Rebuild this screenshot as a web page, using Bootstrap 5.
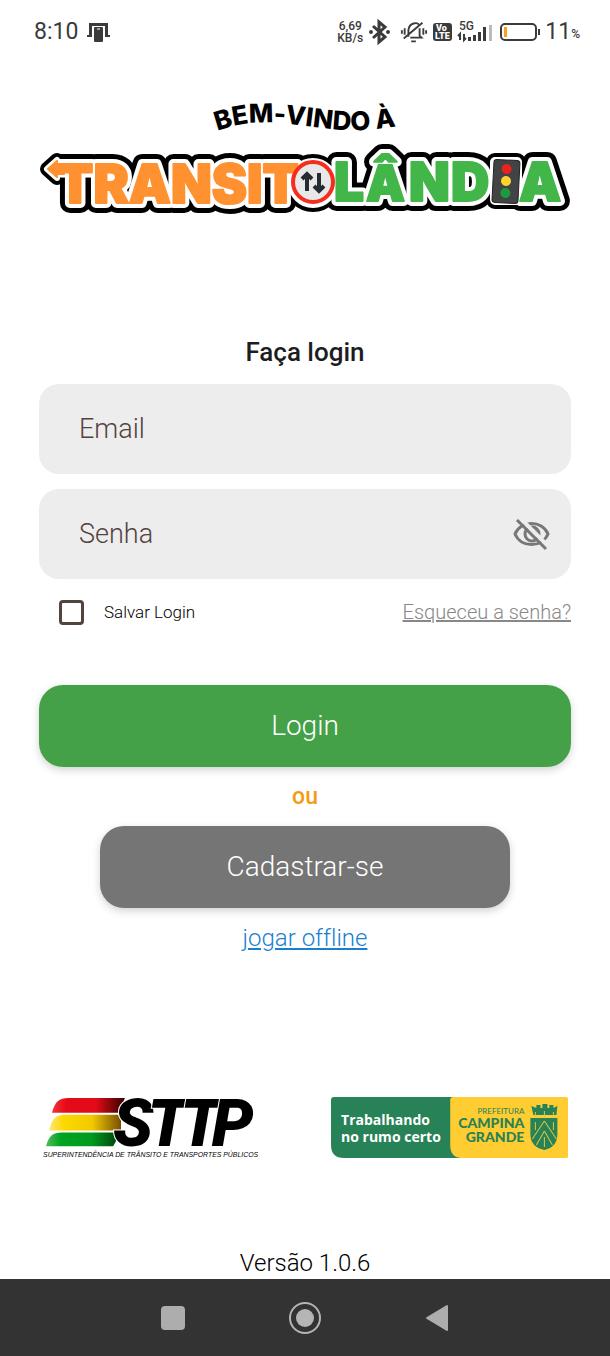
<!DOCTYPE html>
<html lang="pt-BR">
<head>
<meta charset="utf-8">
<meta name="viewport" content="width=device-width, initial-scale=1">
<title>Transitolândia</title>
<link href="https://cdn.jsdelivr.net/npm/bootstrap@5.3.0/dist/css/bootstrap.min.css" rel="stylesheet">
<style>
  body { font-family: Roboto, sans-serif; color: #1d1d1f; background: #fff; font-variant-ligatures: none; }
  svg { display: block; }
  svg text { white-space: pre; }
  .status-bar { height: 64px; padding: 0 30px 0 34px; color: #3b3b3b; font-size: 23px; line-height: 28px; }
  .rate { font-size: 12px; line-height: 12px; font-weight: 500; }
  .screen { padding: 32px 39px 0; }
  .logo-word { font-family: Inter, sans-serif; font-weight: 900; font-size: 53px; }
  .title { font-size: 26px; line-height: 32px; font-weight: 500; margin: 118px 0 16px; }
  .field { height: 90px; border: 0; border-radius: 20px; background: #ededed; padding: 0 40px; font-size: 27px; font-weight: 300; }
  .field:focus { background: #ededed; }
  .field-label { left: 40px; top: 25px; font-size: 27px; line-height: 40px; font-weight: 300; color: #53433f; pointer-events: none; }
  .field:not(:placeholder-shown) + .field-label { visibility: hidden; }
  .fields { gap: 15px; }
  .eye { right: 18px; top: 0; bottom: 0; }
  .options { margin-top: 18px; padding-left: 20px; height: 30px; }
  .save-box.form-check-input { width: 25px; height: 25px; margin: 0 20px 0 0; border: 3px solid #53433f; border-radius: 4px; }
  .save-label { font-size: 17px; line-height: 24px; font-weight: 300; color: #000; }
  .forgot { font-size: 20px; line-height: 24px; font-weight: 300; color: #888; }
  .action { height: 82px; border: 0; border-radius: 24px; font-size: 28px; font-weight: 300; color: #fff; box-shadow: 0 3px 8px rgba(0,0,0,.18); }
  .action-login { background: #45a148; margin-top: 58px; }
  .action-signup { background: #757575; width: 77%; }
  .or { font-size: 23px; line-height: 28px; font-weight: 500; color: #f39c12; margin: 16px 0 15px; }
  .offline { font-size: 24px; line-height: 28px; font-weight: 300; color: #1b7fd0; margin-top: 16px; }
  .sponsors { margin-top: 144px; padding: 0 3px 0 6px; }
  .sponsor-sttp { width: 40%; }
  .sponsor-city { width: 45.4%; }
  .version { font-size: 24px; line-height: 28px; font-weight: 300; color: #000; padding-bottom: 2px; }
  .system-nav { height: 77px; background: #333; padding: 0 154px; }
</style>
</head>
<body>
<div class="d-flex flex-column min-vh-100">
  <header class="status-bar d-flex align-items-center">
    <span>8:10</span>
    <svg class="ms-2 me-auto" width="26" height="24" viewBox="0 0 26 24" aria-hidden="true">
      <path d="M3 3H22V15H19V6H6V15H3ZM1 15H6V17H1ZM19 15H24V17H19Z" fill="#3b3b3b"/>
      <rect x="8" y="7" width="9" height="15" rx="1" fill="#3b3b3b"/>
      <path d="M11 9H14" stroke="#fff"/>
    </svg>
    <span class="rate text-center">6,69<br>KB/s</span>
    <svg class="ms-1" width="25" height="28" viewBox="0 0 25 28" fill="none" stroke="#3b3b3b" stroke-width="3" aria-hidden="true">
      <path d="M6 8L18 19L12 24V4L18 9L6 20"/>
      <circle cx="4" cy="14" r="1" stroke-width="2"/><circle cx="21" cy="14" r="1" stroke-width="2"/>
    </svg>
    <svg class="ms-2 me-1" width="28" height="28" viewBox="0 0 30 28" fill="none" stroke="#3b3b3b" stroke-width="2" aria-hidden="true">
      <path d="M9 19V12C10 3 19 4 20 6M21 10V18L23 20H11M4 21L24 4M12 24H17M5 10V17M2 12V16M25 10V17M28 12V16"/>
    </svg>
    <svg width="21" height="28" viewBox="0 0 21 28" aria-hidden="true">
      <rect x="1" y="5" width="19" height="18" rx="3" fill="#3b3b3b"/>
      <g fill="#fff" font-family="Roboto, sans-serif" font-weight="900" font-size="9"><text x="4" y="13">Vo</text><text x="3" y="21">LTE</text></g>
    </svg>
    <svg class="ms-1" width="38" height="28" viewBox="0 0 38 28" aria-hidden="true">
      <text x="2" y="12" font-family="Roboto, sans-serif" font-weight="500" font-size="12" fill="#3b3b3b">5G</text>
      <path d="M3 22V16L1 18M7 16V22L9 20" fill="none" stroke="#3b3b3b" stroke-width="2"/>
      <path d="M11 19H14V23H11ZM16 17H19V23H16ZM21 14H24V23H21ZM26 9H29V23H26Z" fill="#3b3b3b"/>
      <path d="M32 7H35V23H32Z" fill="#bbb"/>
    </svg>
    <svg class="ms-1" width="42" height="28" viewBox="0 0 42 28" aria-hidden="true">
      <rect x="2" y="6" width="35" height="16" rx="4" fill="none" stroke="#3b3b3b" stroke-width="2"/>
      <rect x="5" y="9" width="3" height="10" fill="#ff9f1a"/><rect x="39" y="11" width="2" height="6" fill="#3b3b3b"/>
    </svg>
    <span class="ms-1">11</span><span class="rate pt-1">%</span>
  </header>

  <main class="screen flex-grow-1 d-flex flex-column">
    <svg class="w-100" viewBox="39 96 532 122" role="img" aria-label="Bem-vindo à Transitolândia">
      <defs>
        <path id="wave" d="M217 131C242 122 262 121 290 124S345 132 365 130S392 128 420 121"/>
        <g id="marks">
          <path d="M47 169L57 160V165H64V174H57V178Z"/>
          <circle cx="313" cy="183" r="22"/><rect x="493" y="160" width="26" height="42" rx="2"/>
        </g>
        <text id="w1" class="logo-word" x="57" y="203">TRANSIT</text>
        <text id="w2" class="logo-word" x="334 366 409 451 519" y="201">L<tspan font-size="49">Â</tspan>NDA</text>
      </defs>
      <text font-family="Inter, sans-serif" font-weight="800" font-size="26"><textPath href="#wave">BEM-VINDO À</textPath></text>
      <g stroke-linejoin="round">
        <g fill="#000" stroke="#000" stroke-width="20"><use href="#w1"/><use href="#w2"/><use href="#marks" stroke-width="14"/></g>
        <g fill="#fff" stroke="#fff" stroke-width="10"><use href="#w1"/><use href="#w2"/><use href="#marks" stroke-width="6"/></g>
        <g fill="#ff9130" stroke="#ff9130" stroke-width="2"><use href="#w1"/><path d="M48 169L57 161V165H64V174H57V177Z"/></g>
        <use href="#w2" fill="#42b649" stroke="#42b649" stroke-width="2"/>
      </g>
      <circle cx="313" cy="182" r="20" fill="#e8e8e8" stroke="#f52d1d" stroke-width="4"/>
      <path d="M307 191V175M302 179L307 174L312 179M319 173V189M314 186L319 191L324 186" fill="none" stroke="#252b33" stroke-width="4"/>
      <g transform="rotate(3 506 181)">
        <rect x="493" y="160" width="26" height="43" rx="3" fill="#414344" stroke="#242424"/>
        <circle cx="506" cy="169" r="5" fill="#e9241c"/><circle cx="506" cy="181" r="5" fill="#ffd22e"/><circle cx="506" cy="193" r="5" fill="#1d9a3c"/>
      </g>
    </svg>

    <form class="d-flex flex-column" onsubmit="return false">
      <h1 class="title text-center">Faça login</h1>
      <div class="fields d-flex flex-column">
        <div class="position-relative">
          <input class="form-control field" id="email" type="email" placeholder=" ">
          <label class="position-absolute field-label" for="email">Email</label></div>
        <div class="position-relative">
          <input class="form-control field" id="senha" type="password" placeholder=" ">
          <label class="position-absolute field-label" for="senha">Senha</label>
          <button class="btn border-0 p-0 position-absolute eye" type="button" aria-label="Mostrar senha">
            <svg width="42" height="42" viewBox="0 0 42 42" fill="none" stroke="#777" stroke-width="3" aria-hidden="true">
              <path d="M4 21C10 7 31 7 37 21C31 35 10 35 4 21Z"/>
              <circle cx="21" cy="21" r="7"/><path d="M21 17A4 4 0 0 1 25 21"/>
              <path d="M9 5L38 34" stroke="#ededed" stroke-width="4"/>
              <path d="M6 7L35 36"/>
            </svg>
          </button></div>
      </div>
      <div class="options d-flex align-items-center justify-content-between">
        <div class="d-flex align-items-center">
          <input class="form-check-input save-box" type="checkbox" id="salvar"><label class="save-label" for="salvar">Salvar Login</label>
        </div>
        <a class="forgot" href="#">Esqueceu a senha?</a>
      </div>
      <button class="btn action action-login w-100" type="submit">Login</button>
      <div class="or text-center">ou</div>
      <button class="btn action action-signup align-self-center" type="button">Cadastrar-se</button>
      <a class="offline align-self-center" href="#">jogar offline</a>
    </form>

    <div class="sponsors d-flex justify-content-between align-items-start">
      <svg class="sponsor-sttp overflow-visible" viewBox="45 1094 212 66" role="img" aria-label="STTP">
        <defs>
          <linearGradient id="red"><stop offset="0" stop-color="#f3333a"/><stop offset=".2" stop-color="#e30b17"/><stop offset=".6" stop-color="#e30b17"/><stop offset="1" stop-color="#300"/></linearGradient>
          <linearGradient id="yellow"><stop offset="0" stop-color="#ffe67a"/><stop offset=".2" stop-color="#fdd900"/><stop offset=".6" stop-color="#f2c900"/><stop offset="1" stop-color="#765000"/></linearGradient>
          <linearGradient id="green"><stop offset="0" stop-color="#4dbd5b"/><stop offset=".2" stop-color="#00a321"/><stop offset=".6" stop-color="#009b20"/><stop offset="1" stop-color="#003b0a"/></linearGradient>
        </defs>
        <path d="M52 1111C55 1100 59 1096 69 1096H126L120 1111Z" fill="url(#red)"/>
        <path d="M49 1129C52 1117 56 1113 65 1113H122L122 1129Z" fill="url(#yellow)"/>
        <path d="M46 1145C49 1134 53 1131 62 1131H122L114 1145Z" fill="url(#green)"/>
        <text x="114 149 182 214" y="1145" font-family="Roboto, sans-serif" font-weight="900" font-style="italic" font-size="67" stroke="#fff" stroke-width="2" paint-order="stroke">STTP</text>
        <text x="43" y="1156" font-family="'Liberation Sans', sans-serif" font-style="italic" font-size="7">SUPERINTENDÊNCIA DE TRÂNSITO E TRANSPORTES PÚBLICOS</text>
      </svg>
      <svg class="sponsor-city" viewBox="331 1096 237 63" role="img" aria-label="Prefeitura Campina Grande">
        <path d="M334 1097H460V1158H344Q331 1158 331 1145V1100Q331 1097 334 1097Z" fill="#278257"/>
        <path d="M453 1097H565Q568 1097 568 1100V1155Q568 1158 565 1158H462Q450 1158 450 1145V1100Q450 1097 453 1097Z" fill="#ffcc32"/>
        <g font-family="'Open Sans', sans-serif" font-weight="700" font-size="14" fill="#fff"><text x="341" y="1125">Trabalhando</text><text x="341" y="1142">no rumo certo</text></g>
        <g fill="#278257">
          <text x="524" y="1114" font-family="Lato, sans-serif" font-size="8" text-anchor="end">PREFEITURA</text>
          <g font-family="Lato, sans-serif" font-weight="900" font-size="14" text-anchor="end"><text x="524" y="1128">CAMPINA</text><text x="524" y="1142">GRANDE</text></g>
          <path d="M531 1106L536 1108V1105H540V1108H542V1104H547V1108H549V1105H553V1108L557 1106L556 1115H533Z"/>
          <path d="M530 1118H557V1134Q557 1147 544 1150Q530 1147 530 1134Z"/>
        </g>
        <path d="M535 1117V1112M544 1117V1111M553 1117V1112M544 1121L532 1139M544 1121L556 1139M544 1131L536 1145M544 1131L552 1145M535 1122V1130M553 1122V1130M544 1137V1147" fill="none" stroke="#e4c63b"/>
      </svg>
    </div>
    <div class="version text-center mt-auto">Versão 1.0.6</div>
  </main>

  <nav class="system-nav d-flex align-items-center justify-content-between" aria-label="Sistema">
    <button class="btn p-0 border-0" aria-label="Recentes"><svg width="38" height="38" viewBox="0 0 38 38"><rect x="7" y="7" width="24" height="24" rx="4" fill="#adadad"/></svg></button>
    <button class="btn p-0 border-0" aria-label="Início"><svg width="38" height="38" viewBox="0 0 38 38"><circle cx="19" cy="19" r="15" fill="none" stroke="#b5b5b5" stroke-width="2"/><circle cx="19" cy="19" r="9" fill="#b5b5b5"/></svg></button>
    <button class="btn p-0 border-0" aria-label="Voltar"><svg width="38" height="38" viewBox="0 0 38 38"><path d="M9 19L29 7V31Z" fill="#adadad" stroke="#adadad" stroke-width="2" stroke-linejoin="round"/></svg></button>
  </nav>
</div>
<script src="https://cdn.jsdelivr.net/npm/bootstrap@5.3.0/dist/js/bootstrap.bundle.min.js"></script>
</body>
</html>
